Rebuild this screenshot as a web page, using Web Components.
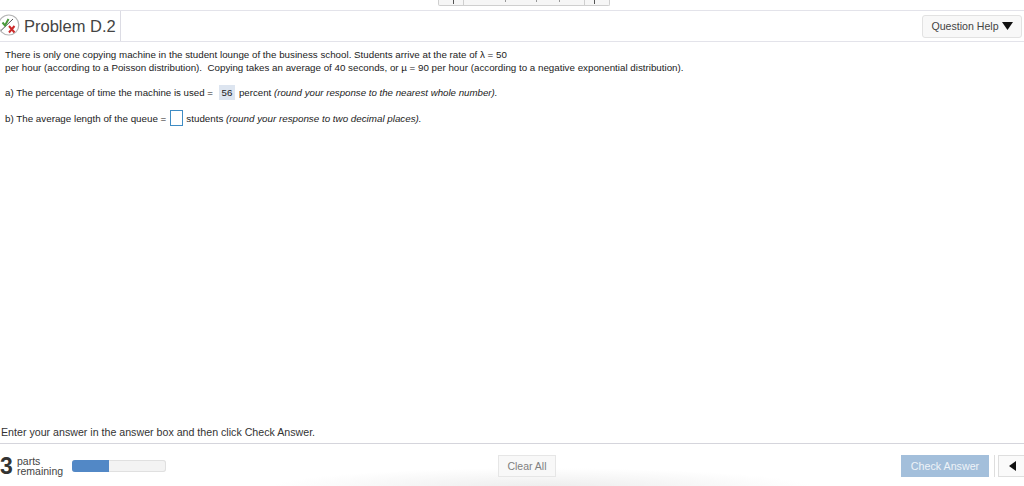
<!DOCTYPE html>
<html>
<head>
<meta charset="utf-8">
<title>Problem D.2</title>
<style>
  html, body { margin: 0; height: 100%; background: #fff; }
  body { font-family: "Liberation Sans", Arial, sans-serif; color: #222; overflow: hidden; }
</style>
</head>
<body>
<player-page>
  <top-strip slot="top"></top-strip>
  <problem-header slot="header" title-text="Problem D.2"></problem-header>
  <problem-body slot="body"></problem-body>
  <player-footer slot="footer"></player-footer>
</player-page>

<script>
class PlayerPage extends HTMLElement {
  constructor() {
    super();
    this.attachShadow({ mode: "open" }).innerHTML = `
      <style>
        :host { display: grid; grid-template-rows: 11px 31px 1fr 43px; height: 486px; width: 1024px; }
      </style>
      <slot name="top"></slot>
      <slot name="header"></slot>
      <slot name="body"></slot>
      <slot name="footer"></slot>
    `;
  }
}

class TopStrip extends HTMLElement {
  constructor() {
    super();
    this.attachShadow({ mode: "open" }).innerHTML = `
      <style>
        :host { display: flex; justify-content: flex-start; height: 11px; box-sizing: border-box; border-bottom: 1px solid #e3e3ea; padding-left: 438px; }
        .bar { display: flex; height: 6px; width: 172px; box-sizing: border-box; border: 1px solid #cfcfcf; border-top: 0; border-radius: 0 0 2px 2px; background: #f6f6f6; }
        .cell { position: relative; border-right: 1px solid #cfcfcf; }
        .cell:last-child { border-right: 0; }
        .a { width: 24px; } .b { width: 120px; } .c { flex: 1; }
        i { position: absolute; top: 0; width: 1px; height: 4px; background: #555; }
        i.s { height: 2px; background: #999; }
      </style>
      <div class="bar">
        <div class="cell a"><i style="left:14px"></i></div>
        <div class="cell b"><i class="s" style="left:41px"></i><i class="s" style="left:72px"></i><i class="s" style="left:95px"></i></div>
        <div class="cell c"><i style="left:9px"></i></div>
      </div>
    `;
  }
}

class ProblemHeader extends HTMLElement {
  constructor() {
    super();
    const title = this.getAttribute("title-text");
    this.attachShadow({ mode: "open" }).innerHTML = `
      <style>
        :host { display: flex; align-items: stretch; height: 31px; box-sizing: border-box; border-bottom: 1px solid #e3e3ea; }
        .title { display: flex; align-items: center; width: 121px; box-sizing: border-box; border-right: 1px solid #dcdce4; font-size: 16.5px; color: #444; gap: 4px; }
        svg { flex: none; }
        .spacer { flex: 1; }
        .help { align-self: center; display: flex; align-items: center; justify-content: center; gap: 3px; width: 100px; height: 23px; margin-right: 2px; box-sizing: border-box; border: 1px solid #e2e2e2; border-radius: 3px; background: #f8f8f8; font-size: 10.6px; color: #444; }
      </style>
      <div class="title">
        <svg width="20" height="24" viewBox="0 0 20 24">
          <circle cx="8.8" cy="11" r="10" fill="#fff" stroke="#b5b5b5" stroke-width="1.2"/>
          <path d="M1 16.5 L13 5" stroke="#555" stroke-width="1"/>
          <path d="M2.5 8.5 L5 11.5 L8.5 5" fill="none" stroke="#4a9a3c" stroke-width="2"/>
          <path d="M9 12 L14.5 18.5 M14.5 12 L9 18.5" stroke="#cc2a2a" stroke-width="2"/>
        </svg>
        <span>${title}</span>
      </div>
      <div class="spacer"></div>
      <div class="help">Question Help
        <svg width="11" height="8" viewBox="0 0 11 8"><path d="M0 0 H11 L5.5 8 Z" fill="#111"/></svg>
      </div>
    `;
  }
}

class ProblemBody extends HTMLElement {
  constructor() {
    super();
    this.attachShadow({ mode: "open" }).innerHTML = `
      <style>
        :host { display: flex; flex-direction: column; padding: 6px 0 0 5px; font-size: 9.78px; color: #222; position: relative; }
        p { margin: 0; line-height: 13px; white-space: nowrap; }
        .q { display: flex; align-items: center; white-space: pre; }
        .q1 { margin-top: 10px; height: 16px; font-size: 9.7px; }
        .q2 { margin-top: 9px; height: 18px; font-size: 9.8px; }
        .ans { display: inline-block; width: 16px; height: 15px; margin: 0 4px 0 6px; text-align: center; line-height: 15px; background: #dde5f0; }
        .box { display: inline-block; width: 13px; height: 16px; margin: 0 3px 0 4px; box-sizing: border-box; border: 1px solid #3f8cc4; background: #fff; }
        em { font-style: italic; }
        .hint { position: absolute; left: 1px; bottom: 5px; font-size: 10.65px; color: #333; white-space: nowrap; }
      </style>
      <p>There is only one copying machine in the student lounge of the business school. Students arrive at the rate of λ = 50</p>
      <p>per hour (according to a Poisson distribution).&nbsp; Copying takes an average of 40 seconds, or µ = 90 per hour (according to a negative exponential distribution).</p>
      <div class="q q1"><span>a) The percentage of time the machine is used =</span><span class="ans">56</span><span>percent <em>(round your response to the nearest whole number).</em></span></div>
      <div class="q q2"><span>b) The average length of the queue =</span><span class="box"></span><span>students <em>(round your response to two decimal places).</em></span></div>
      <div class="hint">Enter your answer in the answer box and then click Check Answer.</div>
    `;
  }
}

class PlayerFooter extends HTMLElement {
  constructor() {
    super();
    this.attachShadow({ mode: "open" }).innerHTML = `
      <style>
        :host { display: flex; align-items: center; box-sizing: border-box; height: 43px; padding-top: 2px; border-top: 1px solid #d5d5dc; position: relative; overflow: hidden; }
        .glow { position: absolute; left: 270px; right: 210px; top: 24px; height: 40px; background: radial-gradient(closest-side, #ececec, #ffffff00); }
        .parts { display: flex; align-items: center; width: 72px; position: relative; }
        .num { font-size: 23px; font-weight: bold; color: #333; width: 17px; line-height: 24px; }
        .lbl { font-size: 10.5px; line-height: 10px; color: #444; }
        .progress { position: relative; width: 94px; height: 12px; box-sizing: border-box; border-radius: 3px; background: #f3f3f3; box-shadow: inset 0 0 0 1px #e0e0e0; overflow: hidden; }
        .fill { width: 37px; height: 100%; background: #5288c6; }
        .clear { position: absolute; left: 498px; top: 11px; width: 58px; height: 22px; box-sizing: border-box; display: flex; align-items: center; justify-content: center; border: 1px solid #e6e6e6; background: #f8f8f8; font-size: 10.5px; color: #808080; }
        .check { position: absolute; left: 901px; top: 11px; width: 88px; height: 22px; display: flex; align-items: center; justify-content: center; background: #a3bfdb; color: #eef3f8; font-size: 10.7px; }
        .back { position: absolute; left: 998px; top: 11px; width: 26px; height: 22px; box-sizing: border-box; display: flex; align-items: center; padding-left: 10px; border: 1px solid #dedede; border-right: 0; background: #fafafa; }
        .rule { position: absolute; left: 994px; top: 11px; width: 1px; height: 22px; background: #dedede; }
      </style>
      <div class="glow"></div>
      <div class="parts">
        <span class="num">3</span>
        <span class="lbl">parts<br>remaining</span>
      </div>
      <div class="progress"><div class="fill"></div></div>
      <div class="clear">Clear All</div>
      <div class="check">Check Answer</div>
      <div class="rule"></div>
      <div class="back"><svg width="7" height="10" viewBox="0 0 7 10"><path d="M7 0 V10 L0 5 Z" fill="#111"/></svg></div>
    `;
  }
}

customElements.define("player-page", PlayerPage);
customElements.define("top-strip", TopStrip);
customElements.define("problem-header", ProblemHeader);
customElements.define("problem-body", ProblemBody);
customElements.define("player-footer", PlayerFooter);
</script>
</body>
</html>
